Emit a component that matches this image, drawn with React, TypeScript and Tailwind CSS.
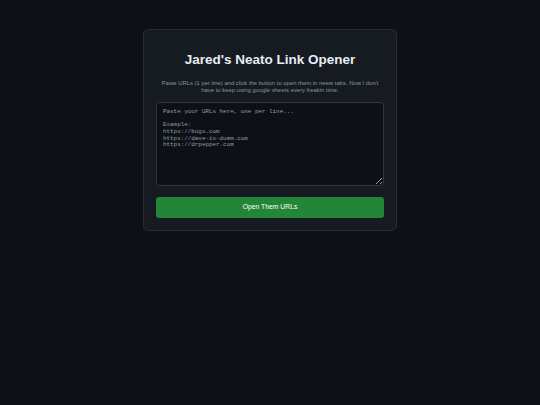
import React from "react";

export default function App() {
  const placeholder =
    "Paste your URLs here, one per line...\n\nExample:\nhttps://bugs.com\nhttps://dave-is-dumm.com\nhttps://drpepper.com";
  return (
    <div
      className="min-h-screen w-full bg-[#0d1117] pt-[29px]"
      style={{ fontFamily: '"Liberation Sans", Arial, sans-serif' }}
    >
      <div className="mx-auto flex w-[254px] flex-col rounded-[5px] border border-[#262c34] bg-[#161b22] px-[12px] pb-[12px] pt-[22px]">
        <h1 className="text-center text-[13.5px] font-bold leading-[15.5px] text-[#e6edf3]">
          Jared's Neato Link Opener
        </h1>
        <p className="mt-[12px] text-center text-[5.9px] leading-[7px] text-[#8b949e]">
          Paste URLs (1 per line) and click the button to open them in neew tabs. Now I don't
          <br />
          have to keep using google sheets every freakin time.
        </p>
        <textarea
          className="mt-[8px] h-[84px] w-full rounded-[3px] border border-[#30363d] bg-[#0d1117] p-[6px] text-[5.9px] leading-[6.8px] text-[#c9d1d9] placeholder:text-[#959da5] outline-none"
          style={{ fontFamily: '"Liberation Mono", "DejaVu Sans Mono", monospace' }}
          placeholder={placeholder}
        />
        <button className="mt-[11px] h-[21px] w-full rounded-[3px] bg-[#238636] text-[6.8px] text-white">
          Open Them URLs
        </button>
      </div>
    </div>
  );
}
